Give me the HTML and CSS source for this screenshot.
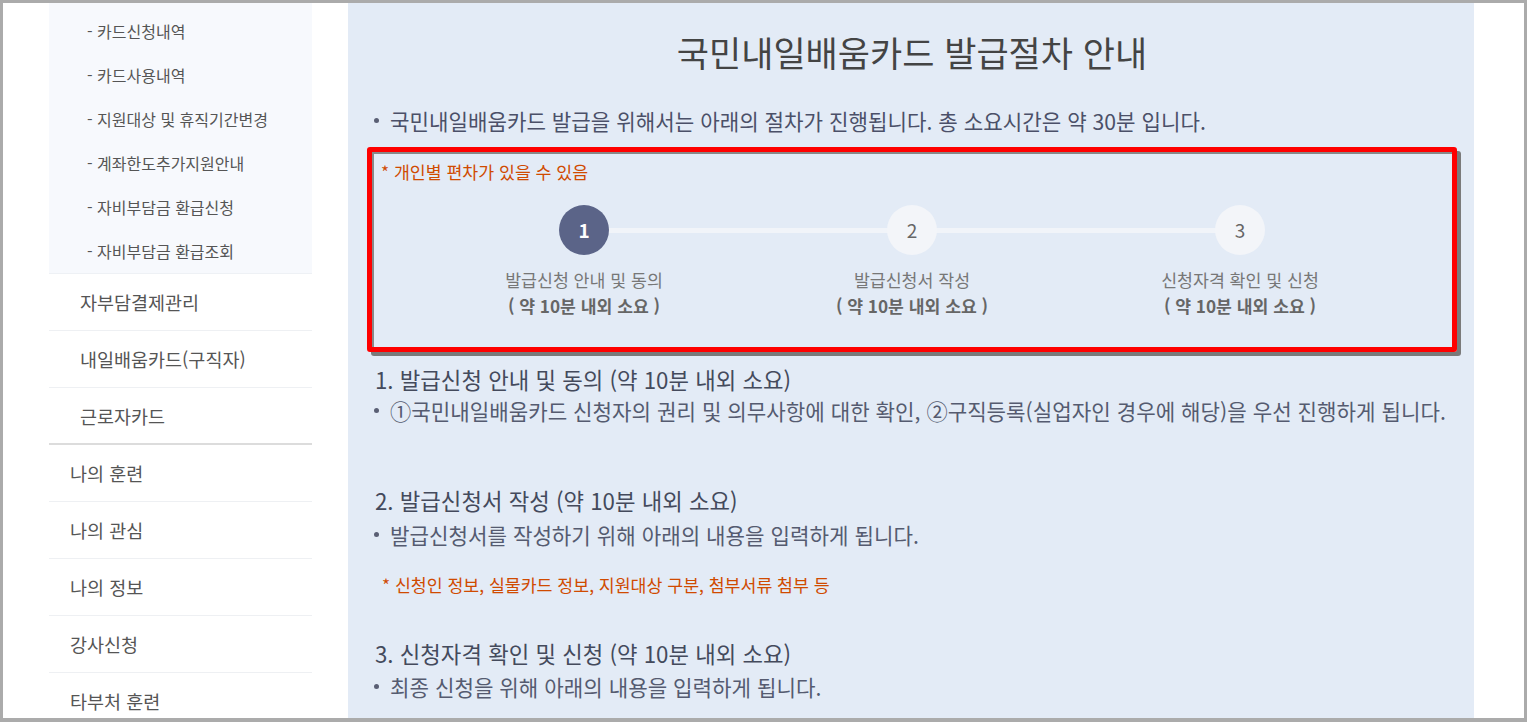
FILE: index.html
```html
<!DOCTYPE html>
<html lang="ko">
<head>
<meta charset="utf-8">
<title>국민내일배움카드 발급절차 안내</title>
<link rel="stylesheet" href="styles.css">
</head>
<body>
<div class="frame">
  <aside class="side">
    <ul class="sub">
      <li>- 카드신청내역</li>
      <li>- 카드사용내역</li>
      <li>- 지원대상 및 휴직기간변경</li>
      <li>- 계좌한도추가지원안내</li>
      <li>- 자비부담금 환급신청</li>
      <li>- 자비부담금 환급조회</li>
    </ul>
    <ul class="lv2">
      <li>자부담결제관리</li>
      <li>내일배움카드(구직자)</li>
      <li>근로자카드</li>
    </ul>
    <ul class="lv1">
      <li>나의 훈련</li>
      <li>나의 관심</li>
      <li>나의 정보</li>
      <li>강사신청</li>
      <li>타부처 훈련</li>
    </ul>
  </aside>
  <main class="main">
    <h1 class="title">국민내일배움카드 발급절차 안내</h1>
    <p class="lead"><span class="dotmark"></span>국민내일배움카드 발급을 위해서는 아래의 절차가 진행됩니다. 총 소요시간은 약 30분 입니다.</p>
    <div class="stepbox">
      <p class="note">* 개인별 편차가 있을 수 있음</p>
      <div class="steps">
        <div class="step">
          <div class="track track-first"><span class="num on">1</span></div>
          <p class="lbl">발급신청 안내 및 동의</p>
          <p class="time">( 약 10분 내외 소요 )</p>
        </div>
        <div class="step">
          <div class="track"><span class="num">2</span></div>
          <p class="lbl">발급신청서 작성</p>
          <p class="time">( 약 10분 내외 소요 )</p>
        </div>
        <div class="step">
          <div class="track track-last"><span class="num">3</span></div>
          <p class="lbl">신청자격 확인 및 신청</p>
          <p class="time">( 약 10분 내외 소요 )</p>
        </div>
      </div>
    </div>
    <h2 class="sec sec1">1. 발급신청 안내 및 동의 (약 10분 내외 소요)</h2>
    <p class="bul bul1"><span class="dotmark"></span>①국민내일배움카드 신청자의 권리 및 의무사항에 대한 확인, ②구직등록(실업자인 경우에 해당)을 우선 진행하게 됩니다.</p>
    <h2 class="sec sec2">2. 발급신청서 작성 (약 10분 내외 소요)</h2>
    <p class="bul bul2"><span class="dotmark"></span>발급신청서를 작성하기 위해 아래의 내용을 입력하게 됩니다.</p>
    <p class="note2">* 신청인 정보, 실물카드 정보, 지원대상 구분, 첨부서류 첨부 등</p>
    <h2 class="sec sec3">3. 신청자격 확인 및 신청 (약 10분 내외 소요)</h2>
    <p class="bul bul3"><span class="dotmark"></span>최종 신청을 위해 아래의 내용을 입력하게 됩니다.</p>
  </main>
</div>
</body>
</html>
```

FILE: styles.css
```css
* { box-sizing: border-box; }
html, body { margin: 0; padding: 0; }
body {
  font-family: "Noto Sans CJK KR", "Noto Sans", sans-serif;
  background: #fff;
}
ul { list-style: none; margin: 0; padding: 0; }
p, h1, h2 { margin: 0; font-weight: 400; }

.frame {
  width: 1527px;
  height: 722px;
  border: 3px solid #ababab;
  border-bottom-width: 4px;
  display: flex;
  background: #fff;
  overflow: hidden;
}

/* sidebar */
.side {
  width: 263px;
  margin-left: 46px;
  flex: none;
}
.sub {
  background: #f7f9fd;
  padding-top: 6px;
  border-bottom: 1px solid #eef1f5;
}
.sub li {
  height: 44px;
  line-height: 44px;
  padding-left: 38px;
  font-size: 16px;
  color: #555;
}
.lv2 li {
  height: 57px;
  line-height: 56px;
  padding-left: 31px;
  font-size: 18.5px;
  color: #555;
  border-bottom: 1px solid #eef0f3;
}
.lv2 li:last-child { border-bottom: 2px solid #dcdcdc; }
.lv1 li {
  height: 57px;
  line-height: 56px;
  padding-left: 21px;
  font-size: 18.5px;
  color: #555;
  border-bottom: 1px solid #eef0f3;
}

/* main */
.main {
  width: 1126px;
  margin-left: 36px;
  flex: none;
  background: #e3ebf6;
  padding: 27px 17px 0 19px;
}
.title {
  text-align: center;
  font-size: 35px;
  line-height: 44px;
  color: #444;
}
.dotmark {
  display: inline-block;
  width: 5px;
  height: 5px;
  border-radius: 50%;
  background: #5a5f74;
  margin: 0 11px 0 3px;
  vertical-align: 0.35em;
}
.lead {
  margin-top: 32px;
  padding-left: 4px;
  font-size: 21.2px;
  line-height: 30px;
  color: #4b5068;
}
.stepbox {
  margin-top: 11px;
  border: 5px solid #ff0000;
  border-radius: 3px;
  box-shadow: 4px 4px 0 #7a7a7a, inset 2px 2px 0 #888;
  padding: 8px 0 28px 0;
}
.note {
  padding-left: 9px;
  font-size: 17.3px;
  line-height: 24px;
  color: #d04a00;
}
.steps {
  width: 984px;
  margin: 21px auto 0;
  display: grid;
  grid-template-columns: repeat(3, 1fr);
}
.step { text-align: center; }
.track {
  height: 50px;
  display: flex;
  justify-content: center;
  background: linear-gradient(#f1f4f9, #f1f4f9) no-repeat;
  background-size: 100% 5px;
  background-position: 0 23px;
}
.track-first { background-size: 50% 5px; background-position: 100% 23px; }
.track-last { background-size: 50% 5px; background-position: 0 23px; }
.num {
  width: 50px;
  height: 50px;
  border-radius: 50%;
  background: #f3f5f9;
  color: #666;
  font-size: 19px;
  line-height: 50px;
  text-align: center;
}
.num.on {
  background: #5b6488;
  color: #fff;
  font-weight: 700;
}
.lbl {
  margin-top: 12px;
  font-size: 17.3px;
  line-height: 26px;
  color: #777;
}
.time {
  font-size: 17.2px;
  line-height: 26px;
  font-weight: 700;
  color: #666;
}
.sec {
  padding-left: 8px;
  font-size: 22.3px;
  line-height: 32px;
  color: #444a5c;
}
.bul {
  padding-left: 4px;
  font-size: 21.2px;
  line-height: 30px;
  color: #555b70;
}
.sec1 { margin-top: 11px; }
.bul1 { margin-top: 1px; }
.sec2 { margin-top: 58px; }
.bul2 { margin-top: 4px; }
.note2 {
  margin-top: 23px;
  padding-left: 15px;
  font-size: 17.3px;
  line-height: 24px;
  color: #d04a00;
}
.sec3 { margin-top: 40px; }
.bul3 { margin-top: 3px; }
```
